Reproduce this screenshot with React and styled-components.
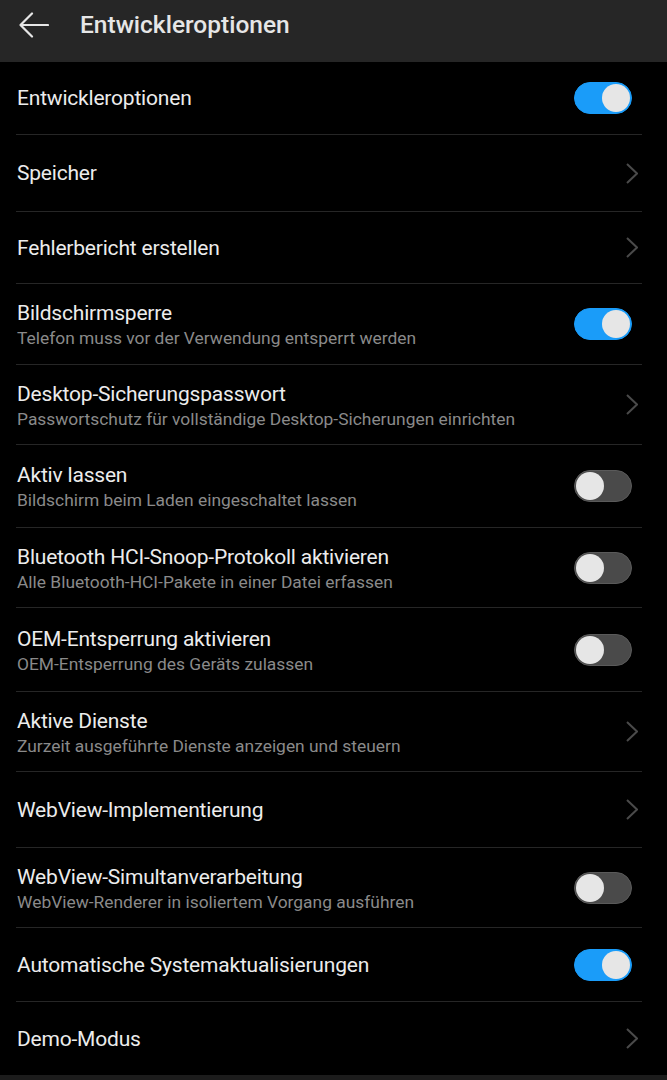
import React from "react";
import styled, { createGlobalStyle } from "styled-components";

const Global = createGlobalStyle`
  html, body { margin: 0; padding: 0; background: #000; }
  body { font-family: Roboto, "Noto Sans", sans-serif; -webkit-font-smoothing: antialiased; }
`;

const Screen = styled.div`
  width: 667px;
  height: 1080px;
  background: #000;
  display: flex;
  flex-direction: column;
  overflow: hidden;
`;

const TopBar = styled.header`
  height: 62px;
  flex: 0 0 62px;
  background: #262626;
  display: flex;
  align-items: flex-start;
  padding: 11px 0 0 19px;
  box-sizing: border-box;
`;

const BackButton = styled.div`
  width: 32px;
  height: 28px;
  display: flex;
  align-items: center;
  justify-content: flex-start;
  margin-right: 29px;
`;

const Title = styled.h1`
  margin: 0;
  font-size: 24.5px;
  line-height: 28px;
  font-weight: 500;
  color: #e6e6e6;
  letter-spacing: 0;
`;

const List = styled.div`
  flex: 1;
  display: flex;
  flex-direction: column;
  padding: 0 25px 0 16px;
`;

const Row = styled.div`
  height: ${(p) => p.$h}px;
  flex: 0 0 ${(p) => p.$h}px;
  box-sizing: border-box;
  display: flex;
  align-items: center;
  border-bottom: ${(p) => (p.$last ? "none" : "1px solid #262626")};
`;

const Texts = styled.div`
  flex: 1;
  display: flex;
  flex-direction: column;
  padding-left: 1px;
  padding-top: ${(p) => (p.$two ? "2px" : "0")};
`;

const Label = styled.div`
  font-size: 21px;
  letter-spacing: -0.2px;
  color: #ececec;
  line-height: 26px;
`;

const Sub = styled.div`
  font-size: 17.4px;
  color: #8a8a8a;
  line-height: 24px;
`;

const Track = styled.div`
  width: 58px;
  height: 32px;
  border-radius: 16px;
  box-sizing: border-box;
  background: ${(p) => (p.$on ? "#1a9cf9" : "#4a4a4a")};
  border: 1px solid ${(p) => (p.$on ? "#1a9cf9" : "#5a5a5a")};
  display: flex;
  align-items: center;
  justify-content: ${(p) => (p.$on ? "flex-end" : "flex-start")};
  padding: 0 1px;
  margin-right: 10px;
`;

const Knob = styled.div`
  width: 28px;
  height: 28px;
  border-radius: 50%;
  background: #e6e6e6;
`;

const Chevron = styled.svg`
  width: 12px;
  height: 21px;
  margin-right: 4px;
`;

const BottomStrip = styled.div`
  height: 5px;
  flex: 0 0 5px;
  background: #1c1c1c;
`;

const items = [
  { t: "Entwickleroptionen", kind: "on", h: 73 },
  { t: "Speicher", kind: "chev", h: 77 },
  { t: "Fehlerbericht erstellen", kind: "chev", h: 72 },
  { t: "Bildschirmsperre", s: "Telefon muss vor der Verwendung entsperrt werden", kind: "on", h: 81 },
  { t: "Desktop-Sicherungspasswort", s: "Passwortschutz für vollständige Desktop-Sicherungen einrichten", kind: "chev", h: 80 },
  { t: "Aktiv lassen", s: "Bildschirm beim Laden eingeschaltet lassen", kind: "off", h: 83 },
  { t: "Bluetooth HCI-Snoop-Protokoll aktivieren", s: "Alle Bluetooth-HCI-Pakete in einer Datei erfassen", kind: "off", h: 80 },
  { t: "OEM-Entsperrung aktivieren", s: "OEM-Entsperrung des Geräts zulassen", kind: "off", h: 84 },
  { t: "Aktive Dienste", s: "Zurzeit ausgeführte Dienste anzeigen und steuern", kind: "chev", h: 80 },
  { t: "WebView-Implementierung", kind: "chev", h: 76 },
  { t: "WebView-Simultanverarbeitung", s: "WebView-Renderer in isoliertem Vorgang ausführen", kind: "off", h: 80 },
  { t: "Automatische Systemaktualisierungen", kind: "on", h: 74 },
  { t: "Demo-Modus", kind: "chev", h: 73 },
];

function Toggle({ on }) {
  return (
    <Track $on={on}>
      <Knob />
    </Track>
  );
}

export default function App() {
  return (
    <Screen>
      <Global />
      <TopBar>
        <BackButton>
          <svg width="30" height="26" viewBox="0 0 30 26" fill="none">
            <path d="M13 1.5 L1.5 13 L13 24.5 M1.5 13 H29" stroke="#e6e6e6" strokeWidth="2.2" strokeLinecap="round" strokeLinejoin="round" />
          </svg>
        </BackButton>
        <Title>Entwickleroptionen</Title>
      </TopBar>
      <List>
        {items.map((it, i) => (
          <Row key={i} $h={it.h} $last={i === items.length - 1}>
            <Texts $two={!!it.s}>
              <Label>{it.t}</Label>
              {it.s && <Sub>{it.s}</Sub>}
            </Texts>
            {it.kind === "chev" ? (
              <Chevron viewBox="0 0 12 21" fill="none">
                <path d="M1 1 L11 10.5 L1 20" stroke="#4a4a4a" strokeWidth="2" />
              </Chevron>
            ) : (
              <Toggle on={it.kind === "on"} />
            )}
          </Row>
        ))}
      </List>
      <BottomStrip />
    </Screen>
  );
}
